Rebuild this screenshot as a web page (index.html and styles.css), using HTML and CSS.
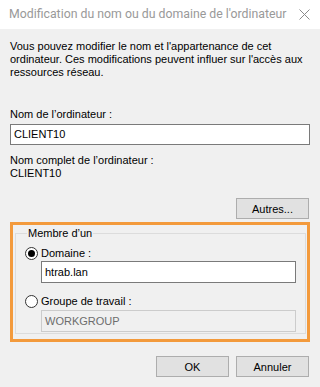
FILE: index.html
```html
<!DOCTYPE html>
<html lang="fr">
<head>
    <meta charset="UTF-8">
    <meta name="viewport" content="width=device-width, initial-scale=1.0">
    <title>Modification du nom ou du domaine de l'ordinateur</title>
    <link rel="stylesheet" href="styles.css">
</head>
<body>
    <div class="titlebar">
        <span class="title">Modification du nom ou du domaine de l'ordinateur</span>
        <svg class="close" width="11" height="11" viewBox="0 0 11 11">
            <path d="M0.5 0.5 L10.5 10.5 M10.5 0.5 L0.5 10.5" stroke="#8a8a8a" stroke-width="1" fill="none"/>
        </svg>
    </div>

    <div class="content">
        <p class="intro">Vous pouvez modifier le nom et l'appartenance de cet ordinateur. Ces modifications peuvent influer sur l'accès aux ressources réseau.</p>

        <div class="label label-name">Nom de l’ordinateur :</div>
        <div class="textbox">CLIENT10</div>

        <div class="label label-full">Nom complet de l’ordinateur :</div>
        <div class="label">CLIENT10</div>

        <div class="row-right">
            <button class="btn btn-other">Autres...</button>
        </div>

        <div class="highlight">
            <fieldset class="groupbox">
                <legend>Membre d’un</legend>
                <div class="option">
                    <span class="radio checked"></span>
                    <span>Domaine :</span>
                </div>
                <div class="textbox textbox-indent">htrab.lan</div>
                <div class="option option-second">
                    <span class="radio"></span>
                    <span>Groupe de travail :</span>
                </div>
                <div class="textbox textbox-indent disabled">WORKGROUP</div>
            </fieldset>
        </div>

        <div class="row-right actions">
            <button class="btn">OK</button>
            <button class="btn">Annuler</button>
        </div>
    </div>
</body>
</html>
```

FILE: styles.css
```css
body {
    margin: 0;
    padding: 0;
    background-color: #f0f0f0;
    font-family: "Liberation Sans", Arial, sans-serif;
    font-size: 11px;
    line-height: 13px;
    color: #000;
}
.titlebar {
    height: 29px;
    background: #fff;
    display: flex;
    align-items: center;
    justify-content: space-between;
    padding: 0 10px 0 9px;
}
.title {
    font-family: Roboto, "Liberation Sans", sans-serif;
    font-size: 12.3px;
    white-space: nowrap;
    color: #999;
    padding-bottom: 1px;
}
.close {
    display: block;
    flex-shrink: 0;
    margin-bottom: 1px;
}
.content {
    padding: 0 10px;
}
.intro {
    margin: 11px 0 0 0;
}
.label-name {
    margin-top: 29px;
}
.label-full {
    margin-top: 9px;
}
.textbox {
    margin-top: 3px;
    height: 19px;
    line-height: 19px;
    border: 1px solid #7a7a7a;
    background: #fff;
    padding: 0 3px;
}
.row-right {
    display: flex;
    justify-content: flex-end;
    gap: 7px;
    padding-right: 1px;
}
.btn {
    width: 73px;
    height: 21px;
    padding: 0;
    background: #e1e1e1;
    border: 1px solid #adadad;
    font-family: "Liberation Sans", Arial, sans-serif;
    font-size: 11px;
    color: #000;
}
.btn-other {
    margin-top: 18px;
}
.highlight {
    margin-top: 3px;
    border: 3px solid #f39a3c;
    height: 114px;
    padding: 0 1px 0 2px;
}
.groupbox {
    margin: 2px 0 0 0;
    padding: 0 9px 0 9px;
    height: 105px;
    border: 1px solid #dcdcdc;
}
.groupbox legend {
    padding: 0 1px;
    margin-left: 2px;
}
.option {
    display: flex;
    align-items: center;
    gap: 3px;
    margin-top: 6px;
    height: 15px;
}
.option-second {
    margin-top: 11px;
}
.radio {
    width: 11px;
    height: 11px;
    border: 1px solid #333;
    border-radius: 50%;
    background: #fff;
    display: flex;
    align-items: center;
    justify-content: center;
}
.radio.checked::after {
    content: "";
    width: 7px;
    height: 7px;
    border-radius: 50%;
    background: #000;
}
.textbox-indent {
    margin-left: 16px;
    margin-top: 0;
    height: 20px;
    line-height: 20px;
}
.disabled {
    background: #f0f0f0;
    border-color: #ccc;
    color: #6d6d6d;
    margin-top: 1px;
}
.actions {
    margin-top: 14px;
}
```
